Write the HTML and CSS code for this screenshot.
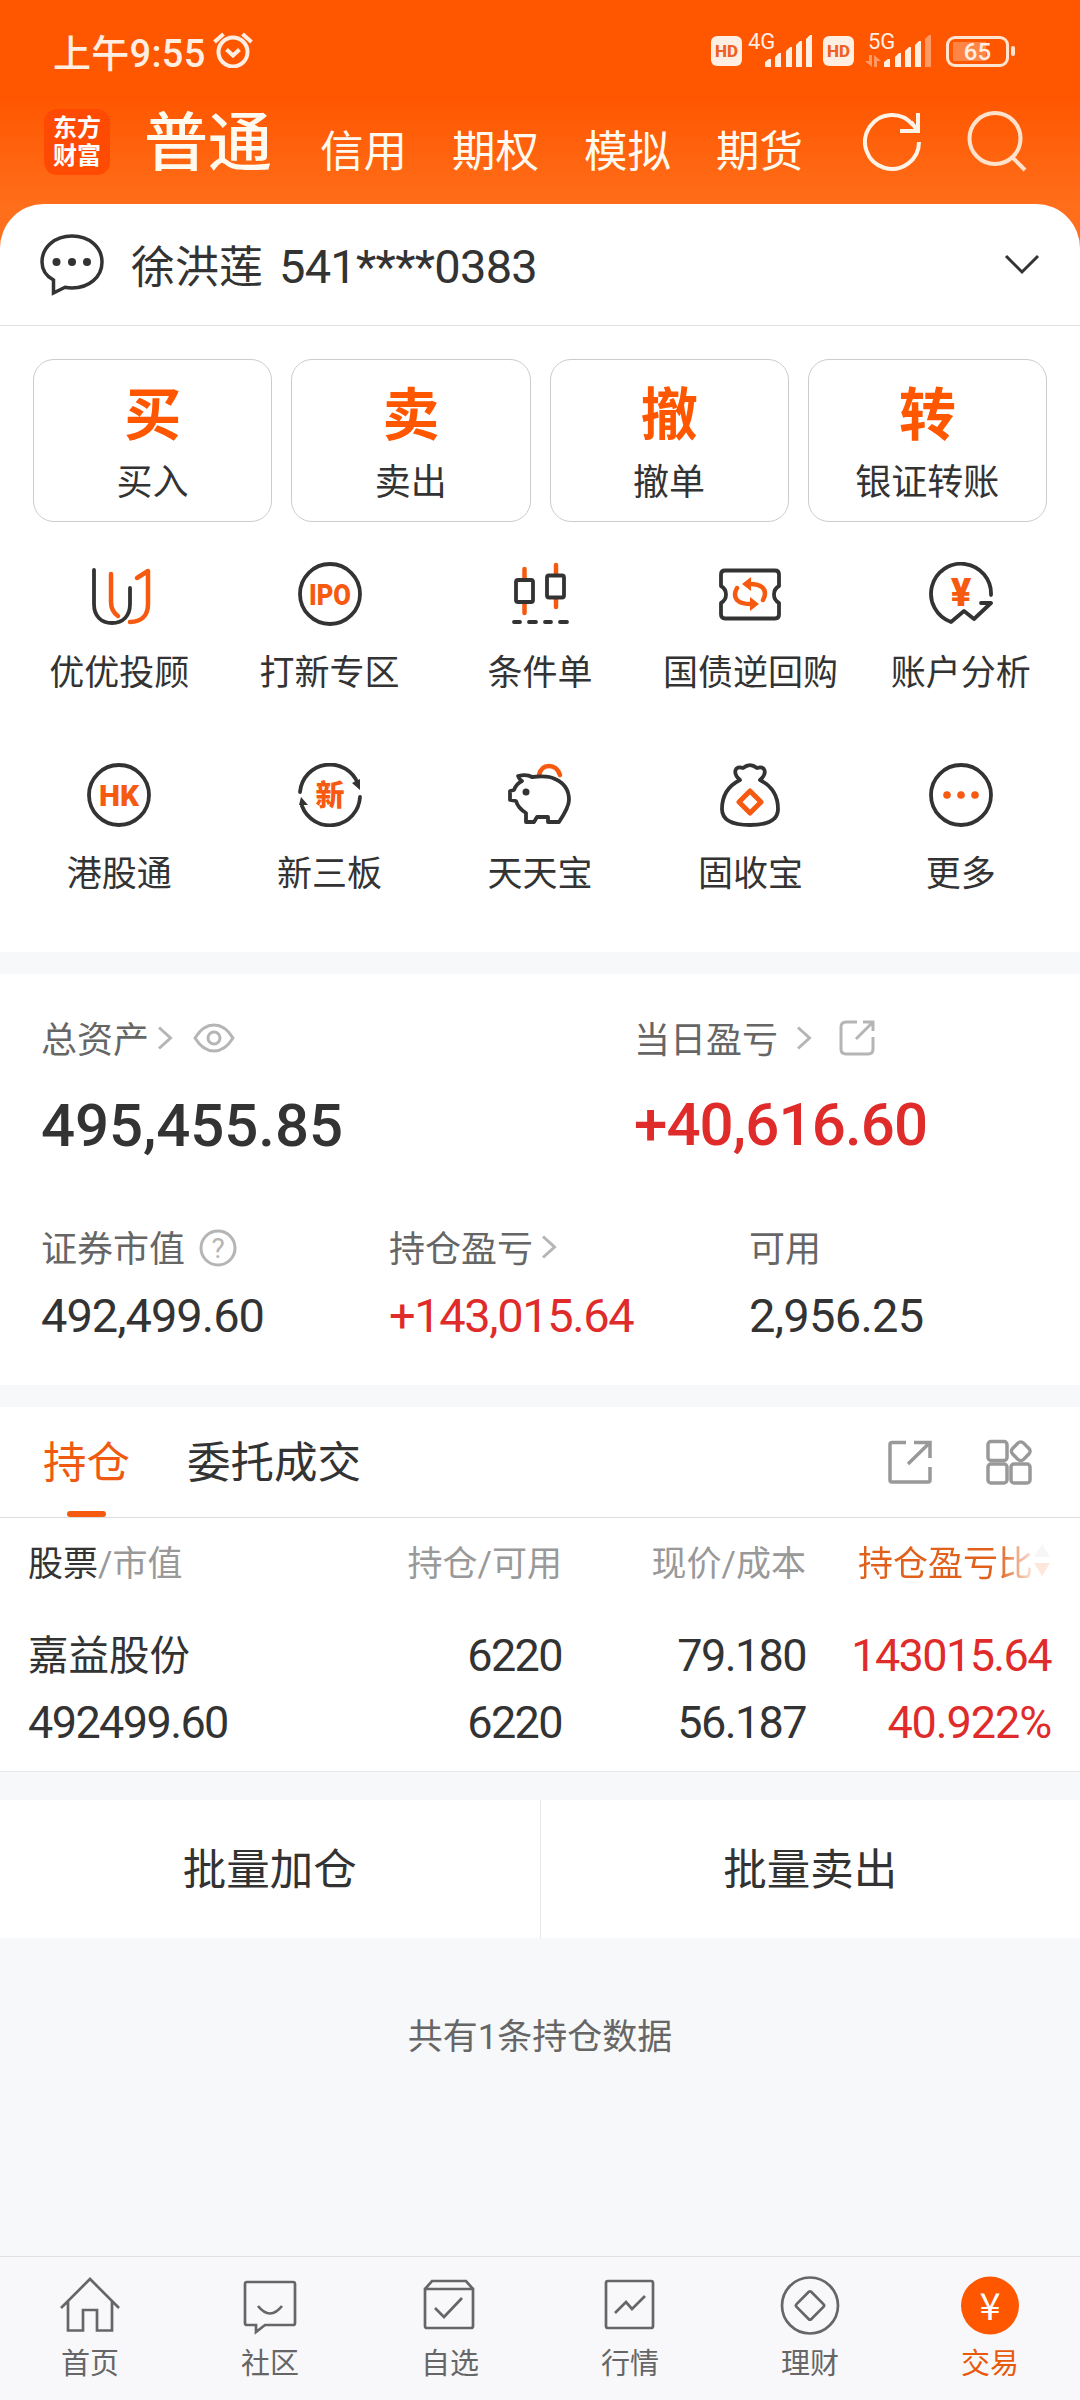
FILE: index.html
```html
<!DOCTYPE html>
<html lang="zh-CN">
<head>
  <meta charset="UTF-8">
  <meta name="viewport" content="width=device-width, initial-scale=1.0">
  <title>交易</title>
  <link rel="stylesheet" href="styles.css">
</head>
<body>
  <header class="top">
    <div class="status-bar">
      <span class="time">上午9:55</span>
      <svg class="alarm" width="40" height="36" viewBox="0 0 40 36" fill="none" stroke="#ffeee2" stroke-width="4">
        <circle cx="20" cy="20" r="14.500"/>
        <path d="M13.500 17.500l6.500 6 6.500-6M1.500 10l9-8M38.500 10l-9-8"/>
      </svg>
      <div class="signals">
        <span class="hd">HD</span>
        <svg class="sim" width="66" height="46" viewBox="0 -8 66 46" fill="#ffeee2">
          <text x="0" y="19" font-size="22">4G</text>
          <path d="M17 37v-5l4-3h2v8zM27 37V27l4-4h2v14zM38 37V21l4-4h2v20zM48 37V15l4-4h2v26zM58 37V9l4-4h2v32z"/>
        </svg>
        <span class="hd">HD</span>
        <svg class="sim sim-5g" width="70" height="46" viewBox="0 -8 70 46" fill="#ffeee2">
          <text x="3" y="19" font-size="22">5G</text>
          <path fill="#ff9a66" d="M4 25h3v12l-7-6h4zM9 37V25l7 6h-4v6z"/>
          <path d="M19 37v-5l4-3h2v8zM30 37V27l4-4h2v14zM40 37V21l4-4h2v20zM50 37V15l4-4h2v26z"/>
          <path fill="#ff9a66" d="M60 37V9l4-4h2v32z"/>
        </svg>
        <div class="battery"><span>65</span></div>
        <i class="battery-nub"></i>
      </div>
    </div>
    <nav class="account-types">
      <div class="logo">东方<br>财富</div>
      <a class="type active">普通</a>
      <a class="type">信用</a>
      <a class="type">期权</a>
      <a class="type">模拟</a>
      <a class="type">期货</a>
      <svg class="refresh" width="60" height="62" viewBox="0 0 60 62" fill="none" stroke="#fff3e8" stroke-width="4">
        <path d="M56 32A27 27 0 1 1 50 15"/>
        <path d="M55 3v18H37M55 21L48 12"/>
      </svg>
      <svg class="search" width="62" height="62" viewBox="0 0 62 62" fill="none" stroke="#ffe2cc" stroke-width="4">
        <circle cx="29" cy="28.500" r="25.500"/>
        <path d="M46 47l13 13"/>
      </svg>
    </nav>
  </header>

  <main>
    <section class="account">
      <svg width="64" height="64" viewBox="0 0 64 64" fill="none" stroke="#333" stroke-width="3.500">
        <path d="M13.500 60V47C6 43 2 36 2 29 2 14 15 3 32 3s30 11 30 26-13 26-30 26q-4 0-7-.7z"/>
        <g fill="#333" stroke="none"><circle cx="16.500" cy="29" r="4"/><circle cx="32" cy="29" r="4"/><circle cx="47" cy="29" r="4"/></g>
      </svg>
      <span class="account-name">徐洪莲 <b>541****0383</b></span>
      <svg class="down" width="36" height="22" viewBox="0 0 36 22" fill="none" stroke="#333" stroke-width="3"><path d="M2 2l16 16L34 2"/></svg>
    </section>

    <section class="actions">
      <a class="action"><strong>买</strong><span>买入</span></a>
      <a class="action"><strong>卖</strong><span>卖出</span></a>
      <a class="action"><strong>撤</strong><span>撤单</span></a>
      <a class="action"><strong>转</strong><span>银证转账</span></a>
    </section>

    <section class="menu">
      <a class="menu-item">
        <svg class="icon" viewBox="0 0 64 64">
          <path d="M7 8v34c0 12 7 19 18 19s18-7 18-19V26"/>
          <path class="o" d="M24 12v28q0 9 7 14M50 16l11-7v33c0 12-7 18-18 18"/>
        </svg>
        <span>优优投顾</span>
      </a>
      <a class="menu-item">
        <svg class="icon" viewBox="0 0 64 64">
          <circle cx="32" cy="32" r="30"/>
          <text x="32" y="42.500" font-size="29" textLength="42" lengthAdjust="spacingAndGlyphs">IPO</text>
        </svg>
        <span>打新专区</span>
      </a>
      <a class="menu-item">
        <svg class="icon" viewBox="0 0 64 64">
          <path class="o" d="M16.500 7v9M16.500 42v9M48 3v9M48 37v8"/>
          <rect x="8" y="18" width="17" height="22" rx="2"/>
          <rect x="39" y="13.500" width="17" height="22" rx="2"/>
          <path d="M6 60h6M21 60h7M37 60h6M52 60h7"/>
        </svg>
        <span>条件单</span>
      </a>
      <a class="menu-item">
        <svg class="icon" viewBox="0 0 64 64">
          <path d="M7 8.500h50q4 0 4 4V24q-5 3-5 8.500T61 41v11.500q0 4-4 4H7q-4 0-4-4V41q5-3 5-8.500T3 24V12.500q0-4 4-4z"/>
          <path class="o" d="M19 26q-4 7 0 12 4 4 13 4M45 38q4-7 0-12-4-4-13-4"/>
          <path class="of" d="M24 22l9-7v14zM41 42l-9 7V35z"/>
        </svg>
        <span>国债逆回购</span>
      </a>
      <a class="menu-item">
        <svg class="icon" viewBox="0 0 64 64">
          <path d="M62 33A30 30 0 1 0 22 60l13-11 10 8 17-16H52"/>
          <text x="32" y="44" font-size="38">¥</text>
        </svg>
        <span>账户分析</span>
      </a>
      <a class="menu-item">
        <svg class="icon" viewBox="0 0 64 64">
          <circle cx="32" cy="32" r="30"/>
          <text x="32" y="42.500" font-size="29" textLength="40" lengthAdjust="spacingAndGlyphs">HK</text>
        </svg>
        <span>港股通</span>
      </a>
      <a class="menu-item">
        <svg class="icon" viewBox="0 0 64 64">
          <path d="M2 29A30 30 0 0 1 60 21M62 34A30 30 0 0 1 4 43"/>
          <path class="df" d="M54 20l8-4v11zM10 42H1l2-8z"/>
          <text x="32" y="43" font-size="29">新</text>
        </svg>
        <span>新三板</span>
      </a>
      <a class="menu-item">
        <svg class="icon" viewBox="0 0 64 64">
          <path class="o" d="M31 12q2-9 10-9t11 9"/>
          <path d="M10 13q9-2 14 1 16-2 23 2 14 6 14 21 0 7-10 22H40v-5H29l-3 5h-8v-9q-8-5-10-12l-6-1V28l4-1q2-6 8-9-3-2-4-5z"/>
          <circle class="df" cx="18" cy="29" r="3.500"/>
        </svg>
        <span>天天宝</span>
      </a>
      <a class="menu-item">
        <svg class="icon" viewBox="0 0 64 64">
          <path d="M22 17c-8-7-5-15 3-12 5-4 9-4 14 0 8-3 11 5 3 12 12 6 18 15 18 29 0 11-10 16-28 16S4 57 4 46c0-14 6-23 18-29z"/>
          <path class="o thick" d="M32 28l11 11-11 11-11-11z"/>
        </svg>
        <span>固收宝</span>
      </a>
      <a class="menu-item">
        <svg class="icon" viewBox="0 0 64 64">
          <circle cx="32" cy="32" r="30"/>
          <g class="of"><circle cx="18" cy="32" r="3.800"/><circle cx="32" cy="32" r="3.800"/><circle cx="46" cy="32" r="3.800"/></g>
        </svg>
        <span>更多</span>
      </a>
    </section>

    <section class="assets">
      <div class="asset total">
        <div class="label">总资产
          <svg class="more" width="15" height="24" viewBox="0 0 15 24"><path d="M1 1.500l11.500 10.500L1 22.500"/></svg>
          <svg class="eye" width="42" height="30" viewBox="0 0 42 30"><path d="M2 15Q10 2 21 2t19 13Q32 28 21 28T2 15z"/><circle cx="21" cy="15" r="6"/></svg>
        </div>
        <div class="big">495,455.85</div>
      </div>
      <div class="asset today">
        <div class="label">当日盈亏
          <svg class="more" width="15" height="24" viewBox="0 0 15 24"><path d="M1 1.500l11.500 10.500L1 22.500"/></svg>
          <svg class="share" width="36" height="36" viewBox="0 0 36 36"><path d="M18 2H7Q2 2 2 7v22q0 5 5 5h22q5 0 5-5V17M24 2h10v9M34 2L17 19"/></svg>
        </div>
        <div class="big red">+40,616.60</div>
      </div>
      <div class="asset value">
        <div class="label">证券市值
          <svg class="help" width="38" height="38" viewBox="0 0 38 38"><circle cx="19" cy="19" r="17"/><text x="19" y="28.500">?</text></svg>
        </div>
        <div class="num">492,499.60</div>
      </div>
      <div class="asset profit">
        <div class="label">持仓盈亏
          <svg class="more" width="15" height="24" viewBox="0 0 15 24"><path d="M1 1.500l11.500 10.500L1 22.500"/></svg>
        </div>
        <div class="num red">+143,015.64</div>
      </div>
      <div class="asset usable">
        <div class="label">可用</div>
        <div class="num">2,956.25</div>
      </div>
    </section>

    <section class="positions">
      <div class="tabs">
        <a class="tab active">持仓</a>
        <a class="tab">委托成交</a>
        <svg class="tab-share" width="44" height="44" viewBox="0 0 44 44"><path d="M18 2.500H4q-2 0-2 2V40q0 2 2 2h36q2 0 2-2V27M26 2.500h16V18M42 2.500L20 24"/></svg>
        <svg class="tab-grid" width="46" height="46" viewBox="0 0 46 46"><rect x="2" y="2.500" width="19" height="19" rx="3"/><rect x="2" y="25" width="19" height="19" rx="3"/><rect x="25" y="25" width="19" height="19" rx="3"/><rect x="27" y="4.500" width="15.500" height="15.500" rx="4" transform="rotate(45 34.750 12.250)"/></svg>
      </div>
      <div class="row head">
        <span><em>股票</em>/市值</span>
        <span>持仓/可用</span>
        <span>现价/成本</span>
        <span class="sort"><i>持仓盈亏比</i>
          <svg width="18" height="34" viewBox="0 0 18 34"><path fill="#f6f6f6" d="M9 1l8 13H1z"/><path fill="#fde6dc" d="M1 20h16L9 33z"/></svg>
        </span>
      </div>
      <div class="row name-row">
        <span class="stock">嘉益股份</span>
        <span>6220</span>
        <span>79.180</span>
        <span class="red">143015.64</span>
      </div>
      <div class="row">
        <span>492499.60</span>
        <span>6220</span>
        <span>56.187</span>
        <span class="red percent">40.922%</span>
      </div>
    </section>

    <section class="batch">
      <a>批量加仓</a>
      <a>批量卖出</a>
    </section>
    <p class="summary">共有1条持仓数据</p>
  </main>

  <footer class="bottom-nav">
    <a class="nav-item">
      <svg viewBox="0 0 60 60"><path d="M1 33L30 4l29 29M8 26v29.500h15V35h14v20.500h15V26"/></svg>
      <span>首页</span>
    </a>
    <a class="nav-item">
      <svg viewBox="0 0 60 60"><path d="M7 7h46q2 0 2 2v39q0 2-2 2H25l-9 7v-7H7q-2 0-2-2V9q0-2 2-2zM18 31q12 15 24 0"/></svg>
      <span>社区</span>
    </a>
    <a class="nav-item">
      <svg viewBox="0 0 60 60"><path d="M5 14h48v37q0 2-2 2H7q-2 0-2-2zl7-8h34l7 8M15 33l9 9 18-19"/></svg>
      <span>自选</span>
    </a>
    <a class="nav-item">
      <svg viewBox="0 0 60 60"><rect x="6" y="6" width="47" height="47" rx="2"/><path d="M15 38l11-11 6 7 13-13"/></svg>
      <span>行情</span>
    </a>
    <a class="nav-item">
      <svg viewBox="0 0 60 60"><circle cx="30" cy="30.500" r="28"/><rect x="19.500" y="20" width="21" height="21" rx="2" transform="rotate(45 30 30.500)"/></svg>
      <span>理财</span>
    </a>
    <a class="nav-item active">
      <svg viewBox="0 0 60 60"><circle class="coin" cx="30" cy="30.500" r="29"/><text x="30" y="45">¥</text></svg>
      <span>交易</span>
    </a>
  </footer>
</body>
</html>
```

FILE: styles.css
```css
* {
  box-sizing: border-box;
}

body {
  margin: 0;
  width: 1080px;
  height: 2400px;
  display: flex;
  flex-direction: column;
  overflow: hidden;
  background: #f7f8fa;
  color: #333;
  font-family: Roboto, "Noto Sans CJK SC", sans-serif;
  font-size: 35px;
}

svg {
  flex: none;
  display: block;
}

.red {
  color: #e02b2b;
}

/* header */
.top {
  height: 260px;
  margin-bottom: -56px;
  background: linear-gradient(#ff5600 95px, #ff6e1a 205px);
}

.status-bar {
  height: 96px;
  padding: 4px 65px 0 53px;
  display: flex;
  align-items: center;
  color: #ffeee2;
}

.time {
  font-size: 38px;
  letter-spacing: 0.3px;
  font-weight: 500;
}

.alarm {
  margin-left: 7px;
}

.signals {
  margin: -2px 0 0 auto;
  display: flex;
  align-items: center;
}

.hd {
  width: 31px;
  height: 30px;
  margin-top: 4px;
  border-radius: 6px;
  background: #ffeee2;
  color: #f06020;
  font-size: 17px;
  font-weight: 800;
  line-height: 31px;
  text-align: center;
}

.sim {
  margin: -8px 9px 0 6px;
}

.sim-5g {
  margin: -8px 11px 0 11px;
}

.battery {
  width: 63px;
  height: 31px;
  margin-top: 4px;
  border: 3px solid #ffe4d2;
  border-radius: 9px;
  padding: 3px;
  font-size: 24px;
  font-weight: 500;
  line-height: 20px;
  text-align: center;
  background: linear-gradient(90deg, #ff8546 33px, transparent 33px) 4px 3px / 49px 19px no-repeat;
}

.battery-nub {
  width: 4px;
  height: 10px;
  margin: 4px 0 0 2px;
  border-radius: 2px;
  background: #ffe4d2;
}

.account-types {
  display: flex;
  align-items: flex-end;
  height: 90px;
  padding-left: 44px;
  color: #fffaf0;
}

.logo {
  width: 66px;
  height: 66px;
  margin: 0 34px 11px 0;
  padding-top: 5px;
  border-radius: 13px;
  background: #ff4a03;
  color: #fff;
  font-size: 24px;
  font-weight: 700;
  line-height: 28px;
  text-align: center;
}

.type {
  width: 88px;
  margin-right: 44px;
  font-size: 43.5px;
  line-height: 64px;
  white-space: nowrap;
  margin-bottom: 1px;
}

.type.active {
  width: 132px;
  font-size: 64px;
  line-height: 90px;
  font-weight: 500;
  margin-bottom: -3px;
}

.refresh {
  margin: 0 43px 14px 15px;
}

.search {
  margin-bottom: 14px;
}

/* account row */
.account {
  height: 122px;
  padding: 0 40px;
  display: flex;
  align-items: center;
  background: #fff;
  border-bottom: 1px solid #e2e2e4;
  border-radius: 44px 44px 0 0;
}

.account-name {
  margin: -2px 0 0 27px;
  font-size: 44px;
  white-space: pre;
}

.account-name b {
  font-size: 47px;
  font-weight: 400;
  letter-spacing: -0.7px;
  margin-left: 5px;
}

.down {
  margin-left: auto;
}

/* quick actions */
.actions {
  display: grid;
  grid-template-columns: repeat(4, 1fr);
  gap: 19px;
  padding: 33px 33px 0;
  background: #fff;
}

.action {
  height: 163px;
  border: 1px solid #ccc;
  border-radius: 21px;
  display: flex;
  flex-direction: column;
  align-items: center;
}

.action strong {
  margin-top: 16px;
  color: #ff5600;
  font-size: 57px;
  line-height: 80px;
}

.action span {
  font-size: 36px;
  line-height: 54px;
}

.menu {
  height: 430px;
  padding: 40px 14px 0;
  display: grid;
  grid-template-columns: repeat(5, 1fr);
  grid-auto-rows: 201px;
  background: #fff;
}

.menu-item {
  display: flex;
  flex-direction: column;
  align-items: center;
  white-space: nowrap;
}

.menu-item span {
  margin-top: 22px;
  line-height: 52px;
}

.icon {
  width: 64px;
  height: 64px;
  fill: none;
  stroke: #333;
  stroke-width: 3.8;
  stroke-linecap: round;
  stroke-linejoin: round;
}

.icon .o {
  stroke: #f55a10;
  stroke-width: 4.5;
}

.icon .thick {
  stroke-width: 5;
}

.icon .of {
  fill: #f55a10;
  stroke: none;
}

.icon .df {
  fill: #333;
  stroke: none;
}

.icon text {
  fill: #f55a10;
  stroke: none;
  font-weight: 900;
  text-anchor: middle;
}

/* assets */
.assets {
  height: 411px;
  margin-top: 22px;
  padding: 36px 0 0 41px;
  display: grid;
  grid-template-columns: 348px 247px 113px 1fr;
  grid-template-rows: 189px 1fr;
  background: #fff;
}

.total {
  grid-column: 1 / 3;
}

.today {
  grid-column: 3 / 5;
}

.value {
  grid-column: 1;
}

.usable {
  grid-column: 4;
}

.asset {
  white-space: nowrap;
}

.label {
  height: 54px;
  display: flex;
  align-items: center;
  color: #666;
  font-size: 36px;
}

.label svg {
  margin-top: 2px;
  fill: none;
  stroke: #b5b5b5;
  stroke-width: 3;
}

.label .more {
  margin-left: 9px;
}

.label .eye {
  margin-left: 20px;
}

.today {
  margin-left: -2px;
}

.today .label .more {
  margin-left: 19px;
}

.label .share {
  margin-left: 27px;
}

.label .help {
  margin: 4px 0 0 14px;
}

.label .help text {
  fill: #b5b5b5;
  stroke: none;
  font-size: 28px;
  text-anchor: middle;
}

.value,
.profit,
.usable {
  padding-top: 20px;
}

.big {
  margin-top: 25px;
  font-size: 60px;
  line-height: 74px;
  font-weight: 500;
  letter-spacing: -0.1px;
}

.today .big {
  margin-top: 24px;
  letter-spacing: -0.9px;
}

.num {
  margin-top: 13px;
  font-size: 47px;
  line-height: 60px;
  letter-spacing: -1px;
}

.profit .num {
  letter-spacing: -1.4px;
}

.usable .num {
  letter-spacing: -0.7px;
}

/* positions */
.positions {
  height: 365px;
  margin-top: 22px;
  background: #fff;
  border-bottom: 1px solid #e8e8ea;
}

.tabs {
  height: 111px;
  padding: 0 48px 0 43px;
  display: flex;
  align-items: center;
  border-bottom: 1px solid #ddd;
}

.tabs svg {
  fill: none;
  stroke: #999;
  stroke-width: 3.5;
}

.tab {
  position: relative;
  font-size: 43.5px;
  margin: -5px 57px 0 0;
}

.tab.active {
  color: #f05a10;
}

.tab.active::after {
  content: "";
  position: absolute;
  left: 24px;
  bottom: -26px;
  width: 39px;
  height: 6px;
  border-radius: 3px;
  background: #f55a10;
}

.tab-share {
  margin: 0 54px 0 auto;
}

.row {
  height: 67px;
  padding: 0 29px;
  display: grid;
  grid-template-columns: 290px 243px 244px 1fr;
  align-items: center;
  text-align: right;
  font-size: 45px;
  letter-spacing: -1.6px;
  white-space: nowrap;
}

.row > :first-child {
  text-align: left;
  margin-left: -1px;
}

.head {
  height: 84px;
  color: #999;
  font-size: 35px;
  letter-spacing: 0;
}

.head em {
  color: #333;
  font-style: normal;
}

.sort {
  display: flex;
  align-items: center;
  justify-content: flex-end;
}

.sort i {
  font-style: normal;
  color: transparent;
  background: linear-gradient(90deg, #e0601c 80%, #fbe6dc 100%);
  -webkit-background-clip: text;
  background-clip: text;
}

.name-row {
  margin-top: 20px;
}

.row .percent {
  letter-spacing: -1.1px;
}

.row .stock {
  margin-top: -6px;
  font-size: 40.5px;
  letter-spacing: 0;
}

.batch {
  height: 138px;
  margin-top: 28px;
  display: flex;
  background: #fff;
}

.batch a {
  flex: 1;
  font-size: 43.5px;
  line-height: 141px;
  text-align: center;
}

.batch a + a {
  border-left: 1px solid #e8e8ea;
}

.summary {
  margin: 74px 0 0;
  color: #666;
  line-height: 52px;
  text-align: center;
}

/* bottom navigation */
.bottom-nav {
  height: 144px;
  margin-top: auto;
  padding-top: 18px;
  display: flex;
  background: #f8f8fb;
  border-top: 1px solid #e0e0e2;
}

.nav-item {
  flex: 1;
  display: flex;
  flex-direction: column;
  align-items: center;
  color: #666;
  font-size: 29px;
  line-height: 40px;
}

.nav-item svg {
  width: 60px;
  height: 60px;
  margin-bottom: 9px;
  fill: none;
  stroke: #666;
  stroke-width: 2.7;
}

.nav-item.active {
  color: #e8590c;
}

.nav-item .coin {
  fill: #ff5600;
  stroke: none;
}

.nav-item text {
  fill: #fff;
  stroke: none;
  font-family: "Noto Sans CJK SC", sans-serif;
  font-size: 38px;
  text-anchor: middle;
}
```
